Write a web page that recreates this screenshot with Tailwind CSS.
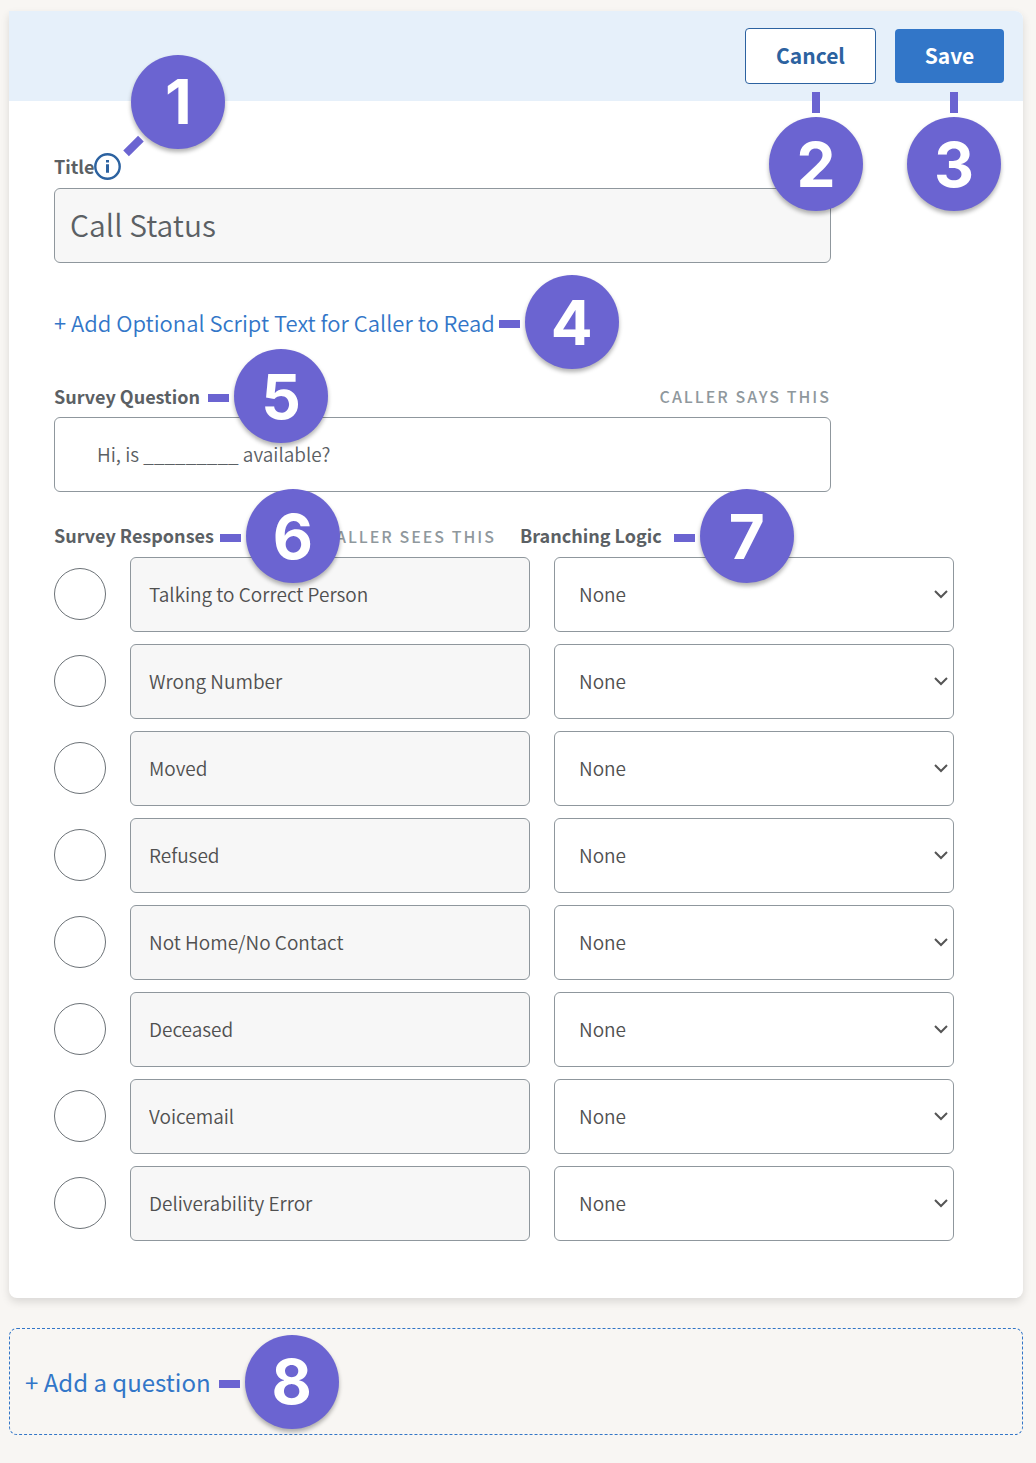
<!DOCTYPE html>
<html lang="en">
<head>
    <meta charset="UTF-8">
    <meta name="viewport" content="width=device-width, initial-scale=1.0">
    <title>Edit Survey Question</title>
    <script src="https://cdn.jsdelivr.net/npm/@tailwindcss/browser@4"></script>
</head>
<body class="bg-[#f8f6f3] pt-[11px] pr-[13px] pb-7 pl-[9px] font-['Noto_Sans_CJK_SC',sans-serif] text-[#5b6064]">
    <main class="rounded-lg rounded-tl-none bg-white pb-[57px] shadow-[0_4px_8px_rgba(0,0,0,0.12)]">
        <!-- Toolbar -->
        <header class="flex h-[90px] items-center justify-end gap-[19px] rounded-tr-lg bg-[#e6f0fa] pr-[19px]">
            <div class="relative">
                <button type="button" class="block h-14 w-[131px] rounded border border-[#2c62a0] bg-white text-[21px] font-bold text-[#2c62a0]">Cancel</button>
                <span class="absolute top-full left-6 mt-2 flex flex-col items-center gap-1">
                    <span class="h-[21px] w-2 bg-[#6b64d1]"></span>
                    <span class="flex size-[94px] items-center justify-center rounded-full bg-[#6b64d1] font-[Inter,sans-serif] text-[62px] font-bold text-white shadow-[0_3px_4px_rgba(0,0,0,0.3)]">2</span>
                </span>
            </div>
            <div class="relative">
                <button type="button" class="block h-[54px] w-[109px] rounded bg-[#3276c8] text-[21px] font-bold text-white">Save</button>
                <span class="absolute top-full left-3 mt-[9px] flex flex-col items-center gap-1">
                    <span class="h-[21px] w-2 bg-[#6b64d1]"></span>
                    <span class="flex size-[94px] items-center justify-center rounded-full bg-[#6b64d1] font-[Inter,sans-serif] text-[62px] font-bold text-white shadow-[0_3px_4px_rgba(0,0,0,0.3)]">3</span>
                </span>
            </div>
        </header>

        <form class="pt-[50px] pr-[69px] pl-[45px]">
            <!-- Title -->
            <div class="max-w-[777px]">
                <div class="mb-[7px] flex h-[30px] items-center">
                    <label for="title" class="text-[18px] font-bold">Title</label>
                    <span class="relative">
                        <button type="button" aria-label="About the title" class="block">
                            <svg class="size-[27px] text-[#2c62a0]" viewBox="0 0 27 27" fill="none">
                                <circle cx="13.5" cy="13.5" r="12.2" stroke="currentColor" stroke-width="2.4"/>
                                <path d="M12 7h3v2.4h-3zM12 11.2h3v8.6h-3z" fill="currentColor"/>
                            </svg>
                        </button>
                        <span class="absolute bottom-full left-[37px] mb-1">
                            <span class="absolute top-[87px] -left-2 h-2 w-[21px] -rotate-45 bg-[#6b64d1]"></span>
                            <span class="flex size-[94px] items-center justify-center rounded-full bg-[#6b64d1] font-[Inter,sans-serif] text-[62px] font-bold text-white shadow-[0_3px_4px_rgba(0,0,0,0.3)]">1</span>
                        </span>
                    </span>
                </div>
                <input id="title" type="text" value="Call Status" class="block h-[75px] w-full rounded-md border border-[#8f979d] bg-[#f7f7f7] px-[15px] pb-1 text-[30px] font-[350]">
            </div>

            <div class="mt-[43px] flex h-8 items-center">
                <div class="relative">
                    <a href="#" class="block text-[22px] leading-8 font-[350] text-[#3276c8]">+ Add Optional Script Text for Caller to Read</a>
                    <span class="absolute top-1/2 left-full ml-1 flex -translate-y-1/2 items-center gap-[5px]">
                        <span class="mt-1 h-2 w-[21px] bg-[#6b64d1]"></span>
                        <span class="flex size-[94px] items-center justify-center rounded-full bg-[#6b64d1] font-[Inter,sans-serif] text-[62px] font-bold text-white shadow-[0_3px_4px_rgba(0,0,0,0.3)]">4</span>
                    </span>
                </div>
            </div>

            <!-- Question -->
            <div class="mt-[43px] max-w-[777px]">
                <div class="mb-[6px] flex h-[30px] items-center justify-between">
                    <div class="relative">
                        <label for="question" class="block text-[18px] font-bold">Survey Question</label>
                        <span class="absolute top-1/2 left-full ml-2 flex -translate-y-1/2 items-center gap-[5px]">
                            <span class="mt-1 h-2 w-[21px] bg-[#6b64d1]"></span>
                            <span class="flex size-[94px] items-center justify-center rounded-full bg-[#6b64d1] font-[Inter,sans-serif] text-[62px] font-bold text-white shadow-[0_3px_4px_rgba(0,0,0,0.3)]">5</span>
                        </span>
                    </div>
                    <span class="text-[16px] font-medium tracking-[2px] text-[#8f989d]">CALLER SAYS THIS</span>
                </div>
                <input id="question" type="text" value="Hi, is _________ available?" class="block h-[75px] w-full rounded-md border border-[#8f979d] bg-white px-[42px] pb-[2px] text-[19px] font-[350]">
            </div>

            <!-- Responses -->
            <div class="mt-[29px] mb-[6px] grid h-[30px] grid-cols-[442fr_434fr] items-center gap-6">
                <div class="flex items-center justify-between">
                    <div class="relative">
                        <h2 class="pb-[2px] text-[18px] font-bold">Survey Responses</h2>
                        <span class="absolute top-1/2 left-full ml-[6px] flex -translate-y-1/2 items-center gap-[5px]">
                            <span class="mt-1 h-2 w-[21px] bg-[#6b64d1]"></span>
                            <span class="flex size-[94px] items-center justify-center rounded-full bg-[#6b64d1] font-[Inter,sans-serif] text-[62px] font-bold text-white shadow-[0_3px_4px_rgba(0,0,0,0.3)]">6</span>
                        </span>
                    </div>
                    <span class="text-[16px] font-medium tracking-[2px] text-[#8f989d]">CALLER SEES THIS</span>
                </div>
                <div class="flex">
                    <div class="relative">
                        <h2 class="pb-[2px] text-[18px] font-bold">Branching Logic</h2>
                        <span class="absolute top-1/2 left-full z-10 ml-3 flex -translate-y-1/2 items-center gap-[5px]">
                            <span class="mt-1 h-2 w-[21px] bg-[#6b64d1]"></span>
                            <span class="flex size-[94px] items-center justify-center rounded-full bg-[#6b64d1] font-[Inter,sans-serif] text-[62px] font-bold text-white shadow-[0_3px_4px_rgba(0,0,0,0.3)]">7</span>
                        </span>
                    </div>
                </div>
            </div>
            <div id="responses" class="space-y-3"></div>
        </form>
    </main>

    <!-- Add question -->
    <div class="mt-[30px] flex h-[107px] items-center rounded-lg border border-dashed border-[#3276c8] pl-[15px]">
        <div class="relative">
            <a href="#" class="block text-[24px] text-[#3276c8]">+ Add a question</a>
            <span class="absolute top-1/2 left-full ml-2 flex -translate-y-1/2 items-center gap-[5px]">
                <span class="mt-1 h-2 w-[21px] bg-[#6b64d1]"></span>
                <span class="flex size-[94px] items-center justify-center rounded-full bg-[#6b64d1] font-[Inter,sans-serif] text-[62px] font-bold text-white shadow-[0_3px_4px_rgba(0,0,0,0.3)]">8</span>
            </span>
        </div>
    </div>

    <script>
        const responses = [
            'Talking to Correct Person',
            'Wrong Number',
            'Moved',
            'Refused',
            'Not Home/No Contact',
            'Deceased',
            'Voicemail',
            'Deliverability Error'
        ];

        // Render one row per response
        const list = document.getElementById('responses');
        responses.forEach((name) => {
            const row = document.createElement('div');
            row.className = 'grid grid-cols-[52px_1fr_1fr] gap-x-6';
            row.innerHTML = `
                <input type="radio" name="response" aria-label="${name}" class="mt-[11px] size-[52px] appearance-none rounded-full border border-[#6c7277] bg-white">
                <input type="text" value="${name}" aria-label="Response text" class="h-[75px] w-full min-w-0 rounded-md border border-[#8f979d] bg-[#f7f7f7] px-[18px] pb-[2px] text-[19px] font-[350] text-[#505050]">
                <div class="relative">
                    <select aria-label="Branching logic for ${name}" class="block h-[75px] w-full appearance-none rounded-md border border-[#8f979d] bg-white pr-8 pl-6 text-[19px] font-[350] text-[#505050]">
                        <option>None</option>
                    </select>
                    <svg class="pointer-events-none absolute top-8 right-1.5 h-[10px] w-[14px]" viewBox="0 0 14 10" fill="none" stroke="#555" stroke-width="2"><path d="M1 2l6 6 6-6"/></svg>
                </div>`;
            list.appendChild(row);
        });
    </script>
</body>
</html>
